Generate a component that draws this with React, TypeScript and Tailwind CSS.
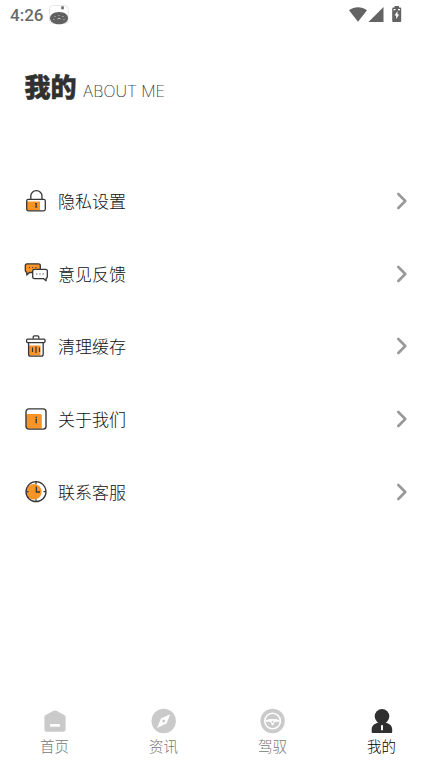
import React from 'react';

const ORANGE = '#fb9426';
const INK = '#363636';

const LockIcon: React.FC = () => (
  <svg className="h-6 w-6" viewBox="0 0 24 24" fill="none">
    <path d="M3 12.5h13V21.5H3z" fill={ORANGE} />
    <rect x="2.7" y="10.4" width="18.6" height="11.4" rx="1.5" stroke={INK} strokeWidth="1.3" />
    <path d="M6.8 10.2V7.2a5.6 5.6 0 0 1 11.2 0v3" stroke={INK} strokeWidth="1.3" />
    <path d="M11 14.6h1.2v4M10.8 18h2.600" stroke={INK} strokeWidth="1.2" />
  </svg>
);

const ChatIcon: React.FC = () => (
  <svg className="h-6 w-6" viewBox="0 0 24 24" fill="none" strokeLinejoin="round">
    <path d="M3 1.800h11.600a1.700 1.700 0 0 1 1.700 1.700v7H5.500L2.800 13v-2.800a1.700 1.700 0 0 1-1.500-1.700v-5A1.700 1.700 0 0 1 3 1.800z" fill={ORANGE} stroke={INK} strokeWidth="1.3" />
    <path d="M5 5.500h1M8.200 5.500h1M11.400 5.500h1" stroke={INK} strokeWidth="1" />
    <path d="M10.400 7.300h11.200a1.700 1.700 0 0 1 1.700 1.700v5.700a1.700 1.700 0 0 1-1.200 1.700v2.400l-2.800-2.200h-8.900a1.700 1.700 0 0 1-1.700-1.700V9a1.700 1.700 0 0 1 1.700-1.700z" fill="#fff" stroke={INK} strokeWidth="1.3" />
    <path d="M12.200 12h1.100M15.400 12h1.100M18.600 12h1.100" stroke={INK} strokeWidth="1.200" />
  </svg>
);

const TrashIcon: React.FC = () => (
  <svg className="h-6 w-6" viewBox="0 0 24 24" fill="none" strokeLinejoin="round">
    <path d="M4 11.500h12.500V21.500H5z" fill={ORANGE} />
    <path d="M9.200 4.800V3a1.200 1.200 0 0 1 1.200-1.200h3.200A1.200 1.200 0 0 1 14.800 3v1.800" stroke={INK} strokeWidth="1.3" />
    <rect x="2.600" y="5.200" width="18.400" height="3.400" rx="1" fill="#fff" stroke={INK} strokeWidth="1.3" />
    <path d="M4.600 8.800v11.400a2 2 0 0 0 2 2h10.600a2 2 0 0 0 2-2V8.800" stroke={INK} strokeWidth="1.3" />
    <path d="M8.500 13.500v4.500M12 12.500v6.500M15.500 13.500v4.500" stroke={INK} strokeWidth="1.2" />
  </svg>
);

const InfoIcon: React.FC = () => (
  <svg className="h-6 w-6" viewBox="0 0 24 24" fill="none">
    <rect x="2.200" y="7" width="15.600" height="14.700" rx="1.500" fill={ORANGE} />
    <rect x="2" y="1.900" width="20" height="20.200" rx="2.800" stroke={INK} strokeWidth="1.4" />
    <path d="M12.200 9.800v1.400M12.200 12v4.300" stroke={INK} strokeWidth="1.400" />
  </svg>
);

const ClockIcon: React.FC = () => (
  <svg className="h-6 w-6" viewBox="0 0 24 24" fill="none">
    <circle cx="9.800" cy="11.700" r="7.800" fill={ORANGE} />
    <circle cx="12" cy="11.700" r="10" stroke={INK} strokeWidth="1.300" />
    <path d="M12 1.700v2.500M12 19.200v2.500M2 11.700h2.500M19.500 11.700H22M12.300 6.500v5.500h3.700" stroke={INK} strokeWidth="1.300" />
  </svg>
);

const HomeIcon: React.FC = () => (
  <svg className="h-[26px] w-[26px]" viewBox="0 0 26 26">
    <path d="M11.600 2.800a2.800 2.800 0 0 1 2.800 0l7.800 4.100a2.400 2.400 0 0 1 1.400 2.200v12.300a2.400 2.400 0 0 1-2.400 2.400H4.800a2.400 2.400 0 0 1-2.400-2.400V9.100a2.400 2.400 0 0 1 1.400-2.200z" fill="#cacaca" />
    <rect x="8" y="16" width="10" height="2.800" rx=".8" fill="#fff" />
  </svg>
);

const CompassIcon: React.FC = () => (
  <svg className="h-[26px] w-[26px]" viewBox="0 0 26 26">
    <circle cx="12.700" cy="13" r="12.200" fill="#cacaca" />
    <path d="M19.300 6.200l-3.800 9.300-9.400 4.500 3.800-9.400z" fill="#fff" />
    <circle cx="12.700" cy="13" r="1.500" fill="#cacaca" />
  </svg>
);

const WheelIcon: React.FC = () => (
  <svg className="h-[26px] w-[26px]" viewBox="0 0 26 26">
    <circle cx="12.600" cy="13" r="12.200" fill="#cacaca" />
    <circle cx="12.600" cy="13" r="7.800" fill="none" stroke="#fff" strokeWidth="1.600" />
    <path d="M5.600 12.200c4.500-1.700 9.500-1.700 14 0v1.600h-3.400c-1.600 0-2.400 1.300-2.600 3l-1 .8-1-.8c-.2-1.700-1-3-2.600-3H5.600z" fill="#fff" />
    <circle cx="12.600" cy="13.700" r="1" fill="#cacaca" />
  </svg>
);

const PersonIcon: React.FC = () => (
  <svg className="h-[26px] w-[26px]" viewBox="0 0 26 26" fill="#303030">
    <circle cx="13" cy="8.300" r="7.300" />
    <path d="M9.200 12.500h7.600v2c4 1.300 6.400 3.500 6.400 6.500V24a1 1 0 0 1-1 1H3.700a1 1 0 0 1-1-1v-3c0-3 2.500-5.200 6.500-6.500z" />
    <rect x="12" y="17" width="2" height="5.300" rx=".4" fill="#fff" />
  </svg>
);

const StatusBar: React.FC = () => (
  <div className="flex h-[30px] items-center justify-between pl-[10px] pr-[33px] text-[#6a6a6a]">
    <div className="flex items-center gap-[6px]">
      <span className="font-[Roboto,sans-serif] text-[17px] font-medium leading-[30px]">4:26</span>
      <svg className="h-5 w-5" viewBox="0 0 20 20">
        <rect x=".6" y=".6" width="18.500" height="18" rx="3" fill="#fff" stroke="#ddd" strokeWidth=".8" />
        <path d="M12.300 1.300h2.500v3h-2.500z" fill="#666" />
        <path d="M1 13.200c0-3.400 3.600-6.200 9.200-6.200s8.800 2.800 8.800 6.200-3.500 6-9 6-9-2.600-9-6z" fill="#606060" />
        <path d="M5.500 11.500h1M9.500 10.500h1M13.500 11.500h1M4.300 14.500h1M8.500 14l1.500-.7 1.500.7M14.500 14.500h1" fill="none" stroke="#ddd" strokeWidth=".8" />
      </svg>
    </div>
    <svg className="h-[18px] w-[54px]" viewBox="0 0 54 18" fill="#636363">
      <path d="M0 4.300C5.300.1 12.700.1 18 4.300L9 15.800z" />
      <path d="M34.500 1v15H19.500z" />
      <path d="M45.500 1.500V0h4.500v1.500h1.200a1 1 0 0 1 1 1V15a1 1 0 0 1-1 1h-7a1 1 0 0 1-1-1V2.500a1 1 0 0 1 1-1z" />
      <path d="M48.500 5l-3 4.500h1.700v3.500l3-4.500h-1.700zM44.500 3h2v1.300h-2zM49 3h2v1.300h-2z" fill="#fff" />
    </svg>
  </div>
);

const menuItems = [
  { label: '隐私设置', icon: LockIcon },
  { label: '意见反馈', icon: ChatIcon },
  { label: '清理缓存', icon: TrashIcon },
  { label: '关于我们', icon: InfoIcon },
  { label: '联系客服', icon: ClockIcon },
];

const tabs = [
  { label: '首页', icon: HomeIcon, active: false },
  { label: '资讯', icon: CompassIcon, active: false },
  { label: '驾驭', icon: WheelIcon, active: false },
  { label: '我的', icon: PersonIcon, active: true },
];

export default function App() {
  return (
    <div className="flex h-[775px] w-[436px] flex-col overflow-hidden bg-white font-['Noto_Sans_CJK_SC',sans-serif] font-light">
      <StatusBar />

      <header className="flex h-[134.7px] items-start pl-[24.5px] pt-[37px]">
        <h1 className="text-[26px] font-black leading-[38px] text-[#303030] [-webkit-text-stroke:0.5px_#303030]">我的</h1>
        <span className="ml-[6.5px] pt-[5px] font-['Inter','Liberation_Sans',sans-serif] text-[16px] font-thin leading-[38px] text-black [-webkit-text-stroke:0.2px_#333]">
          ABOUT ME
        </span>
      </header>

      <ul className="flex flex-col">
        {menuItems.map(({ label, icon: Icon }) => (
          <li key={label} className="flex h-[72.7px] items-center pl-6 pr-[28px]">
            <Icon />
            <span className="ml-[10px] flex-1 text-[17px] leading-6 text-[#111]">{label}</span>
            <svg className="h-5 w-3" viewBox="0 0 12 20" fill="none">
              <path d="M2.300 3l7 7-7 7" stroke="#999" strokeWidth="2.600" strokeLinecap="round" strokeLinejoin="round" />
            </svg>
          </li>
        ))}
      </ul>

      <nav className="mt-auto flex h-[67px]">
        {tabs.map(({ label, icon: Icon, active }) => (
          <div key={label} className="flex flex-1 flex-col items-center">
            <Icon />
            <span className={`mt-px text-[14.5px] leading-[22px] ${active ? 'text-black' : 'text-[#777]'}`}>
              {label}
            </span>
          </div>
        ))}
      </nav>
    </div>
  );
}
